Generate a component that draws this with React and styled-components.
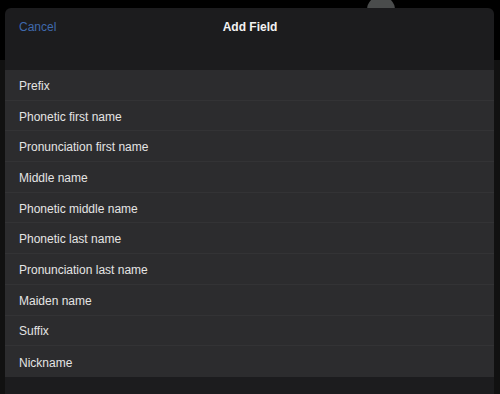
import React from 'react'
import styled, {createGlobalStyle} from 'styled-components';

const GlobalStyle = createGlobalStyle`
  html, body {
    margin: 0;
    padding: 0;
    background: #050505;
  }
  body {
    font-family: "Liberation Sans", Arial, sans-serif;
    -webkit-font-smoothing: antialiased;
  }
`;

const fields = [
  "Prefix",
  "Phonetic first name",
  "Pronunciation first name",
  "Middle name",
  "Phonetic middle name",
  "Phonetic last name",
  "Pronunciation last name",
  "Maiden name",
  "Suffix",
  "Nickname",
];

const App = () => {
  return (
    <Page>
      <GlobalStyle />
      <Backdrop>
        <Avatar />
      </Backdrop>
      <Sheet>
        <Header>
          <NavBar>
            <CancelButton>Cancel</CancelButton>
            <Title>Add Field</Title>
          </NavBar>
        </Header>
        <List>
          {fields.map(field => (
            <Row key={field}>{field}</Row>
          ))}
        </List>
      </Sheet>
    </Page>
  )
}
export default App;

const Page = styled.div`
  position: relative;
  width: 500px;
  height: 394px;
  overflow: hidden;
  background: linear-gradient(to bottom, #000 0, #000 60px, #111 60px);
  padding: 8px 6px 0 5px;
  box-sizing: border-box;
  display: flex;
`;

const Backdrop = styled.div`
  position: absolute;
  inset: 0;
`;

const Avatar = styled.div`
  position: absolute;
  left: 367px;
  top: -4px;
  width: 28px;
  height: 28px;
  border-radius: 50%;
  background: #4a4c4c;
`;

const Sheet = styled.div`
  position: relative;
  flex: 1;
  display: flex;
  flex-direction: column;
  background: #1c1c1e;
  border-radius: 6px 6px 0 0;
  overflow: hidden;
`;

const Header = styled.div`
  height: 62px;
  flex-shrink: 0;
`;

const NavBar = styled.div`
  position: relative;
  height: 38px;
  display: flex;
  align-items: center;
  justify-content: center;
`;

const CancelButton = styled.button`
  position: absolute;
  left: 14px;
  top: 50%;
  transform: translateY(-50%);
  background: none;
  border: none;
  padding: 0;
  font-family: inherit;
  font-size: 12px;
  color: #3f69ad;
`;

const Title = styled.h1`
  margin: 0 0 0 1px;
  font-size: 12px;
  font-weight: 700;
  color: #f2f2f2;
`;

const List = styled.ul`
  list-style: none;
  margin: 0;
  padding: 0;
  background: #2c2c2e;
`;

const Row = styled.li`
  height: 30.7px;
  box-sizing: border-box;
  display: flex;
  align-items: center;
  padding: 2px 0 0 14px;
  font-size: 12px;
  color: #e4e4e4;
  border-bottom: 1px solid #333335;
  &:last-child {
    border-bottom: none;
  }
`;
